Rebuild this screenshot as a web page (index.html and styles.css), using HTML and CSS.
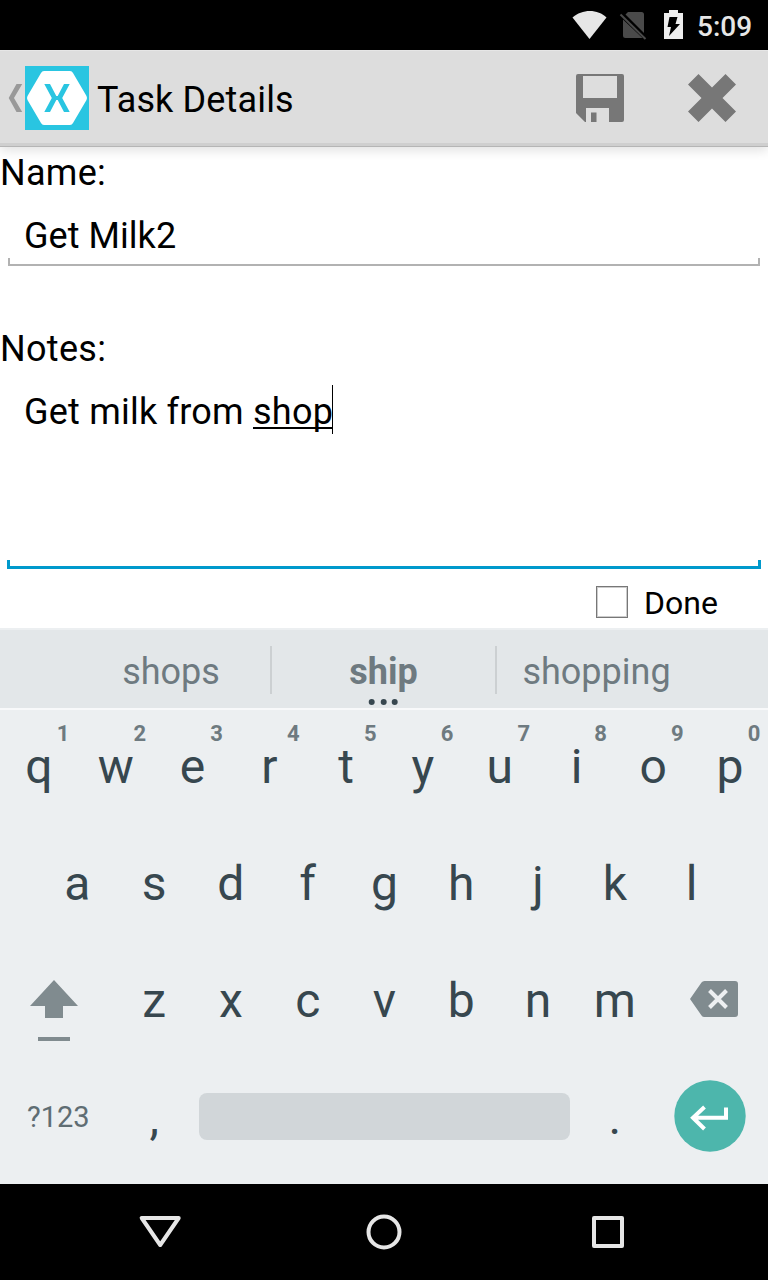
FILE: index.html
```html
<!DOCTYPE html>
<html lang="en">
<head>
<meta charset="utf-8">
<title>Task Details</title>
<link rel="stylesheet" href="styles.css">
</head>
<body>
<div class="screen">
  <header class="status">
    <svg class="status-icons" width="124" height="50" viewBox="0 0 124 50">
      <path d="M0.500 17.500C10 8.700 26 8.700 34.500 17.500L17.500 39Z" fill="#e6e6e6"/>
      <path d="M56 12h13.500a2.500 2.500 0 0 1 2.500 2.500V33L53.500 14.500ZM51 19.500L70.500 38H53.500a2.500 2.500 0 0 1-2.500-2.500Z" fill="#4a4a4a"/>
      <path d="M48.500 14.500L73.500 39" stroke="#4a4a4a" stroke-width="2"/>
      <path d="M92 13h5v-3h9v3h5v26H92Z" fill="#eee"/>
      <path d="M97.500 17h8l-2 7h4.500L97 36l2-9h-3.500Z" fill="#000"/>
    </svg>
    <span class="clock">5:09</span>
  </header>

  <div class="appbar">
    <svg class="back" width="17" height="28" viewBox="0 0 17 28"><path d="M8.500 0H14.200L6 14L14.200 28H8.500L0.700 14Z" fill="#999"/></svg>
    <svg class="logo" width="64" height="64" viewBox="0 0 64 64">
      <rect width="64" height="64" fill="#29c5e1"/>
      <path d="M19 5H45Q47 5 48 7L61.500 30Q62.500 32 61.500 34L48 57Q47 59 45 59H19Q17 59 16 57L2.500 34Q1.500 32 2.500 30L16 7Q17 5 19 5Z" fill="#fff"/>
      <path d="M19.300 18H25L31.300 30H32.700L39 18H44.700L37.200 32L44.700 46H39L32.700 34H31.300L25 46H19.300L26.800 32Z" fill="#29c5e1"/>
    </svg>
    <h1 class="title">Task Details</h1>
    <svg class="action" width="48" height="48" viewBox="0 0 48 48">
      <path fill-rule="evenodd" d="M2 0H46Q48 0 48 2V46Q48 48 46 48H33V34H10V48H9L0 39V2Q0 0 2 0ZM7 2V24H41V2ZM15 38.500H20.500V48H15Z" fill="#777"/>
    </svg>
    <svg class="action" width="48" height="48" viewBox="0 0 48 48">
      <path d="M10.500 0L24 13.500L37.500 0L48 10.500L34.500 24L48 37.500L37.500 48L24 34.500L10.500 48L0 37.500L13.500 24L0 10.500Z" fill="#777"/>
    </svg>
  </div>

  <main class="form">
    <div class="label">Name:</div>
    <div class="field">Get Milk2</div>
    <div class="label label-notes">Notes:</div>
    <div class="field field-notes">Get milk from <span class="composing">shop</span><span class="caret"></span></div>
    <div class="done"><span class="box"></span><span class="done-text">Done</span></div>
  </main>

  <section class="keyboard">
    <div class="suggestions">
      <span class="word word-left">shops</span>
      <span class="word word-mid">ship<svg class="dots" width="32" height="6" viewBox="0 0 32 6"><g fill="#37474f"><circle cx="3.700" cy="3" r="3"/><circle cx="15.700" cy="3" r="3"/><circle cx="26.700" cy="3" r="3"/></g></svg></span>
      <span class="word word-right">shopping</span>
    </div>
    <div class="keys">
      <div class="row">
        <span class="key">q<sup class="num">1</sup></span><span class="key">w<sup class="num">2</sup></span><span class="key">e<sup class="num">3</sup></span><span class="key">r<sup class="num">4</sup></span><span class="key">t<sup class="num">5</sup></span><span class="key">y<sup class="num">6</sup></span><span class="key">u<sup class="num">7</sup></span><span class="key">i<sup class="num">8</sup></span><span class="key">o<sup class="num">9</sup></span><span class="key">p<sup class="num">0</sup></span>
      </div>
      <div class="row">
        <span class="key">a</span><span class="key">s</span><span class="key">d</span><span class="key">f</span><span class="key">g</span><span class="key">h</span><span class="key">j</span><span class="key">k</span><span class="key">l</span>
      </div>
      <div class="row">
        <span class="side side-left"><svg width="48" height="62" viewBox="0 0 48 62"><path d="M24 0L48 26H33V38H15V26H0ZM8 57H40V61H8Z" fill="#808b8f"/></svg></span>
        <span class="key">z</span><span class="key">x</span><span class="key">c</span><span class="key">v</span><span class="key">b</span><span class="key">n</span><span class="key">m</span>
        <span class="side side-right"><svg width="48" height="36" viewBox="0 0 48 36"><path d="M14.500 0H45Q48 0 48 3V33Q48 36 45 36H14.500Q12.500 36 11.500 34.500L0 18L11.500 1.500Q12.500 0 14.500 0Z" fill="#808b8f"/><path d="M19.500 9.500L36.500 26.500M36.500 9.500L19.500 26.500" stroke="#eceff1" stroke-width="4"/></svg></span>
      </div>
      <div class="row row-bottom">
        <span class="side symbols">?123</span>
        <span class="key">,</span>
        <span class="space"></span>
        <span class="key">.</span>
        <span class="side side-enter"><svg width="72" height="72" viewBox="0 0 72 72"><circle cx="36" cy="36" r="35.700" fill="#4db6ac"/><path d="M52 27.500V37.700H19M30.500 27L19 37.700L30.500 49" fill="none" stroke="#fff" stroke-width="4"/></svg></span>
      </div>
    </div>
  </section>

  <nav class="navbar">
    <svg width="768" height="96" viewBox="0 0 768 96" fill="none" stroke="#e6e6e6" stroke-width="4" stroke-linejoin="round">
      <path d="M141.700 34H178.700L160.200 61Z"/><circle cx="384" cy="48" r="15.500"/><rect x="594" y="34" width="28" height="28"/>
    </svg>
  </nav>
</div>
</body>
</html>
```
FILE: styles.css
```css
* { box-sizing: border-box; }
body { margin: 0; font-family: Roboto, sans-serif; background: #fff; color: #000; }
svg { display: block; flex: none; }
.screen { width: 768px; height: 1280px; display: flex; flex-direction: column; overflow: hidden; }

.status { height: 50px; background: #000; display: flex; justify-content: flex-end; align-items: center; padding-right: 16px; flex: none; }
.status-icons { margin-right: 1px; }
.clock { color: #e6e6e6; font-size: 28px; font-weight: 500; line-height: 50px; padding-top: 3px; width: 55px; white-space: nowrap; }

.appbar { height: 97px; background: #ddd; border-bottom: 1px solid #b5b5b5; box-shadow: inset 0 -3px #cfcfcf, inset 0 1px #e6e6e6, 0 4px 10px rgba(0, 0, 0, .11); display: flex; align-items: center; padding: 0 32px 0 8px; flex: none; }
.title { flex: 1; margin: 0 0 0 8px; font-size: 36px; font-weight: 400; line-height: 50px; padding-top: 3px; letter-spacing: .15px; }
.action + .action { margin-left: 64px; }

.form { height: 481px; display: flex; flex-direction: column; font-size: 36px; flex: none; }
.label { height: 51px; line-height: 53px; letter-spacing: .3px; flex: none; }
.label-notes { margin-top: 57px; }
.field { position: relative; height: 68px; line-height: 48px; padding: 14px 24px 0; letter-spacing: .05px; flex: none; }
.field::after { content: ""; position: absolute; left: 8px; right: 8px; bottom: 0; height: 6px; border: 2px solid #b2b2b2; border-top: 0; }
.field-notes { height: 195px; display: flex; white-space: pre; letter-spacing: .22px; }
.field-notes::after { left: 7px; right: 7px; height: 6px; border-color: #0099cc; border-width: 0 3px 3px; }
.composing { height: 41px; border-bottom: 2px solid #000; }
.caret { width: 1px; height: 49px; margin-left: -1px; margin-top: -3px; background: #000; }
.done { display: flex; align-items: center; justify-content: flex-end; gap: 16px; height: 59px; padding: 7px 50px 0 0; font-size: 32px; flex: none; }
.done-text { padding-top: 2px; }
.box { width: 32px; height: 32px; border: 1px solid #777; box-shadow: inset 0 0 0 1px #ccc; }

.keyboard { height: 556px; background: #eceff1; padding-top: 2px; color: #37474f; flex: none; }
.suggestions { height: 78px; background: #e3e7e9; display: flex; color: #6e7a80; font-size: 36px; line-height: 84px; text-align: center; }
.word { position: relative; }
.word-left { width: 272px; padding-left: 70px; }
.word-mid { width: 225px; padding-right: 2px; font-weight: 700; }
.word-right { width: 271px; padding-right: 72px; }
.word-mid::before, .word-mid::after { content: ""; position: absolute; top: 16px; width: 2px; height: 48px; background: #ccd0d2; }
.word-mid::before { left: -2px; }
.word-mid::after { right: 0; }
.dots { position: absolute; left: 96px; top: 69px; }

.keys { height: 476px; box-shadow: inset 0 2px #f8f9fa; }
.row { height: 117px; display: flex; justify-content: center; align-items: center; }
.key { position: relative; width: 76.8px; height: 117px; line-height: 117px; padding-left: 1px; font-size: 48px; text-align: center; flex: none; }
.num { position: absolute; right: 7.5px; top: 13px; font-size: 22px; font-weight: 700; line-height: 26px; color: #6e7a80; }
.side { width: 115.2px; display: flex; flex: none; }
.side-left { padding: 20px 0 0 30px; }
.side-right { padding: 0 0 4px 37px; }
.symbols { font-size: 29px; padding: 0 0 2px 27px; color: #5f6d73; }
.space { width: 371px; height: 47px; margin: 0 6.5px 2px; border-radius: 8px; background: #d1d6d9; flex: none; }
.side-enter { padding: 0 0 4px 21px; }

.navbar { height: 96px; background: #000; flex: none; }
```
